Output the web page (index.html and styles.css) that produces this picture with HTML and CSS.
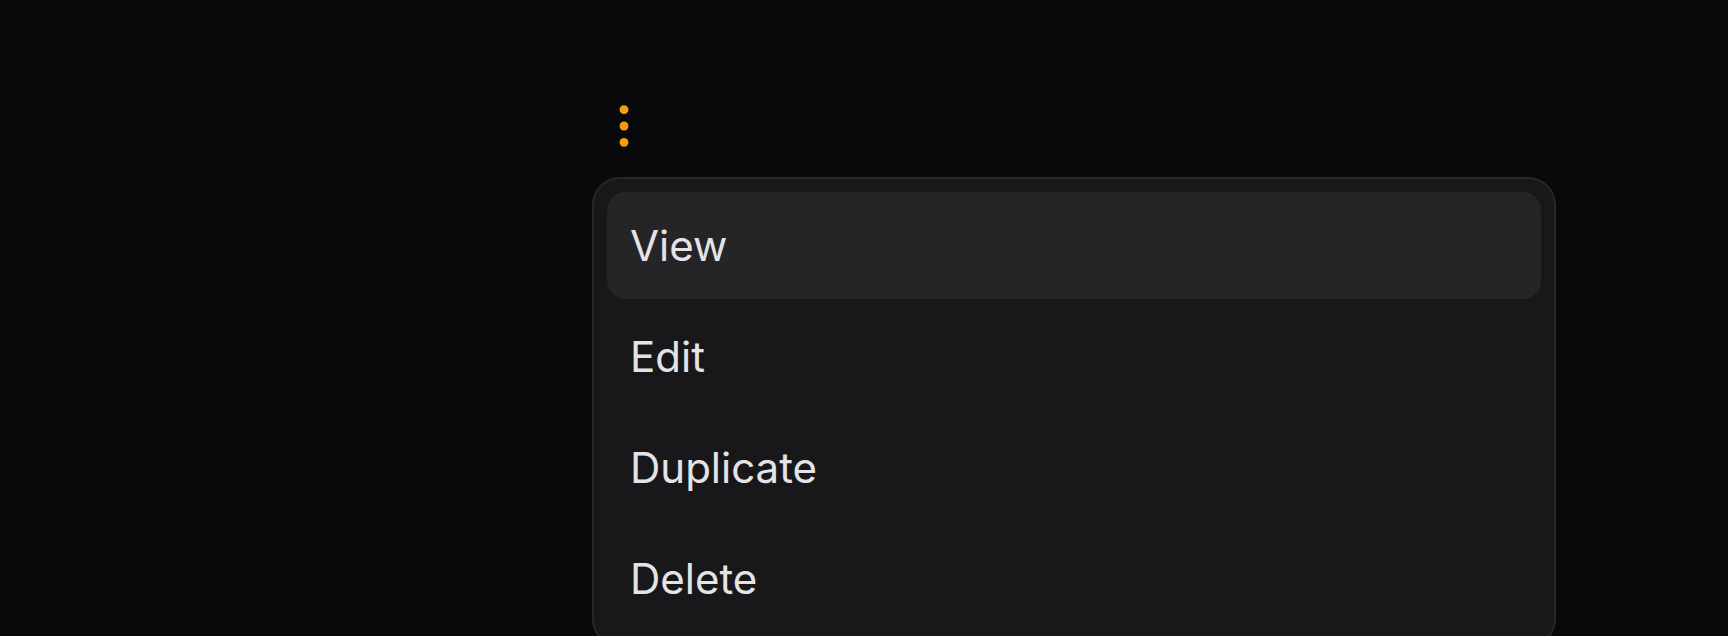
FILE: index.html
```html
<!DOCTYPE html>
<html lang="en">
<head>
<meta charset="utf-8">
<title>Menu</title>
<link rel="stylesheet" href="styles.css">
</head>
<body>
<div class="page">
  <button class="trigger" aria-label="More options">
    <svg viewBox="0 0 24 24" width="56" height="56" fill="#f59e0b">
      <circle cx="12" cy="5" r="1.9"/>
      <circle cx="12" cy="12" r="1.9"/>
      <circle cx="12" cy="19" r="1.9"/>
    </svg>
  </button>
  <div class="menu" role="menu">
    <div class="item active" role="menuitem">View</div>
    <div class="item" role="menuitem">Edit</div>
    <div class="item" role="menuitem">Duplicate</div>
    <div class="item" role="menuitem">Delete</div>
  </div>
</div>
</body>
</html>
```

FILE: styles.css
```css
html, body {
  margin: 0;
  padding: 0;
  background: #09090b;
  height: 100%;
  overflow: hidden;
}

.page {
  display: flex;
  flex-direction: column;
  align-items: flex-start;
  padding: 98px 0 0 592px;
  font-family: Inter, "Noto Sans", sans-serif;
}

.trigger {
  width: 56px;
  height: 56px;
  margin-left: 4px;
  padding: 0;
  border: 0;
  background: transparent;
  display: flex;
  align-items: center;
  justify-content: center;
}

.trigger svg {
  display: block;
}

.menu {
  margin-top: 23px;
  width: 964px;
  box-sizing: border-box;
  border: 2px solid #27272a;
  border-radius: 28px;
  background: #18181b;
  padding: 13px;
  display: flex;
  flex-direction: column;
  gap: 4px;
}

.item {
  height: 107px;
  display: flex;
  align-items: center;
  padding-left: 23px;
  border-radius: 18px;
  color: #e4e4e7;
  font-size: 42px;
  line-height: 1;
}

.item.active {
  background: #252528;
}
```
